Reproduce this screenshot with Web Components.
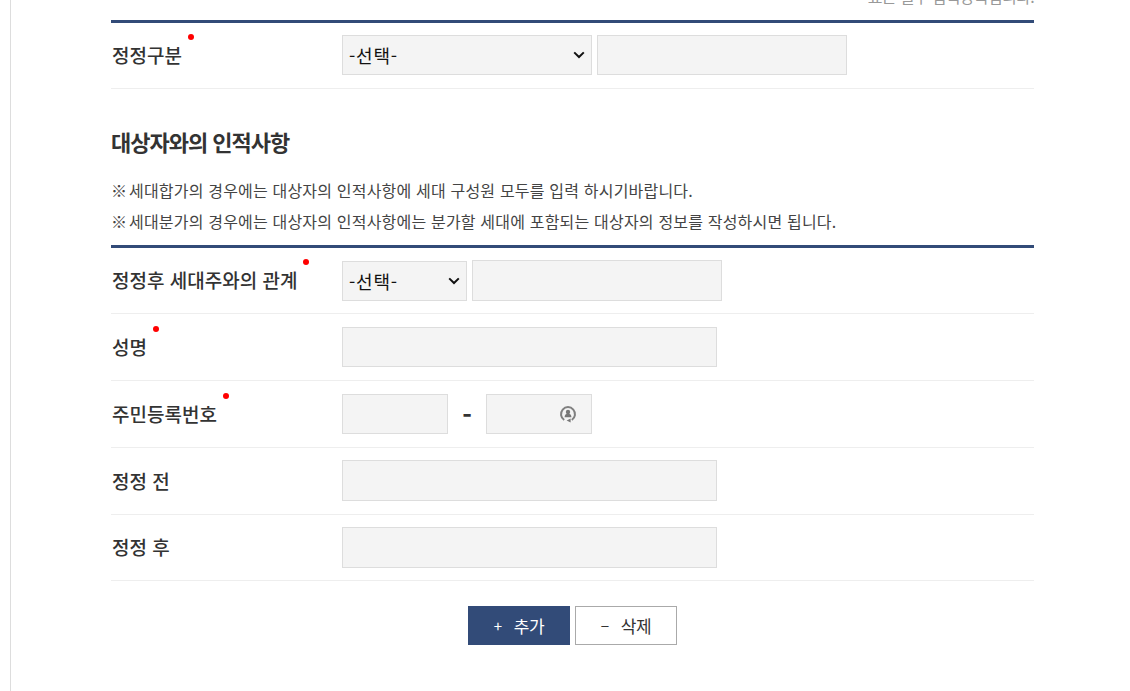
<!DOCTYPE html>
<html lang="ko">
<head>
<meta charset="utf-8">
<title>정정구분</title>
<style>
html, body { margin: 0; height: 100%; overflow: hidden; background: #fff; }
body { font-family: "Noto Sans CJK KR", "Noto Sans", sans-serif; color: #333; }
</style>
</head>
<body>
<form-page>
  <note-top>* 표는 필수 입력항목입니다.</note-top>
  <form-table>
    <form-row label="정정구분" required short up>
      <form-select width="250"></form-select>
      <form-input width="250"></form-input>
    </form-row>
  </form-table>
  <section-title>대상자와의 인적사항</section-title>
  <info-note><span style="display:inline-block;width:18px">※</span>세대합가의 경우에는 대상자의 인적사항에 세대 구성원 모두를 입력 하시기바랍니다.</info-note>
  <info-note><span style="display:inline-block;width:18px">※</span>세대분가의 경우에는 대상자의 인적사항에는 분가할 세대에 포함되는 대상자의 정보를 작성하시면 됩니다.</info-note>
  <form-table class="second">
    <form-row label="정정후 세대주와의 관계" required short>
      <form-select width="125"></form-select>
      <form-input width="250" height="41"></form-input>
    </form-row>
    <form-row label="성명" required>
      <form-input width="375"></form-input>
    </form-row>
    <form-row label="주민등록번호" required>
      <form-input width="106"></form-input>
      <span style="font-size:26px;font-weight:700;width:28px;text-align:center;color:#333;margin-bottom:2px">-</span>
      <form-input width="106" secure></form-input>
    </form-row>
    <form-row label="정정 전" up>
      <form-input width="375" height="41"></form-input>
    </form-row>
    <form-row label="정정 후" short>
      <form-input width="375" height="41"></form-input>
    </form-row>
  </form-table>
  <button-bar>
    <form-button primary icon="+">추가</form-button>
    <form-button icon="−">삭제</form-button>
  </button-bar>
</form-page>

<script>
/**** 공통 */
function define(name, css, html, init) {
  customElements.define(name, class extends HTMLElement {
    constructor() {
      super();
      const shadow = this.attachShadow({ mode: 'open' });
      shadow.innerHTML = `<style>${css}</style>${html}`;
      if (init) init(this, shadow);
    }
  });
}

/**** 페이지 */
define('form-page', `
  :host { display: block; height: 691px; margin-left: 10px; border-left: 1px solid #ddd; box-sizing: border-box; overflow: hidden; }
  .inner { width: 923px; margin-left: 100px; margin-top: -12px; }
`, `<div class="inner"><slot></slot></div>`);

define('note-top', `
  :host { display: block; height: 32px; line-height: 16px; font-size: 16px; color: #999; text-align: right; letter-spacing: -0.65px; }
`, `<slot></slot>`);

/**** 표 */
define('form-table', `
  :host { display: block; border-top: 3px solid #324b78; }
  :host(.second) { margin-top: 8px; }
`, `<slot></slot>`);

define('form-row', `
  :host { display: flex; align-items: center; height: 66px; border-bottom: 1px solid #eee; }
  :host([short]) { height: 65px; }
  :host([up]) .fields { margin-bottom: 1px; }
  .label { width: 230px; padding-left: 1px; flex: none; font-size: 19px; font-weight: 500; letter-spacing: 0; color: #333; position: relative; top: -1px; }
  .label span { position: relative; }
  .dot { position: absolute; right: -12px; top: -7px; width: 6px; height: 6px; border-radius: 50%; background: #f00; }
  .fields { display: flex; align-items: center; gap: 5px; }
`, `<div class="label"><span></span></div><div class="fields"><slot></slot></div>`, (el, shadow) => {
  queueMicrotask(() => {
    const span = shadow.querySelector('.label span');
    span.textContent = el.getAttribute('label');
    if (el.hasAttribute('required')) {
      const dot = document.createElement('i');
      dot.className = 'dot';
      span.appendChild(dot);
    }
  });
});

const FIELD_CSS = `
  :host { display: block; position: relative; }
  input, select { display: block; box-sizing: border-box; width: 100%; height: 40px; background: #f4f4f4; border: 1px solid #ddd; border-radius: 0; padding: 0 6px; margin: 0; font: 400 18px "Noto Sans CJK KR", sans-serif; color: #111; outline: none; appearance: none; }
  select { letter-spacing: 0.8px; }
  svg { position: absolute; }
  svg[hidden] { display: none; }
`;

define('form-select', FIELD_CSS + `
  .arrow { right: 7px; top: 16px; width: 12px; height: 8px; pointer-events: none; }
`, `<select><option>-선택-</option></select><svg class="arrow" viewBox="0 0 12 8" fill="none"><path d="M1.2 1.4L6 6l4.8-4.6" stroke="#111" stroke-width="2"/></svg>`, (el, shadow) => {
  queueMicrotask(() => { el.style.width = el.getAttribute('width') + 'px'; });
});

define('form-input', FIELD_CSS + `
  .secure { right: 14px; top: 10px; width: 20px; height: 20px; }
`, `<input type="text"><svg class="secure" viewBox="0 0 20 20" hidden fill="none"><path d="M6.2 16a7 7 0 1 1 7.6 0" stroke="#808080" stroke-width="2"/><circle cx="10" cy="8" r="2.2" fill="#777"/><path d="M6.6 13.2a3.4 3.4 0 0 1 6.8 0z" fill="#777"/><path d="M12.6 14.6v4l-4-2z" fill="#777"/></svg>`, (el, shadow) => {
  queueMicrotask(() => {
    el.style.width = el.getAttribute('width') + 'px';
    if (el.getAttribute('height')) shadow.querySelector('input').style.height = el.getAttribute('height') + 'px';
    if (el.hasAttribute('secure')) shadow.querySelector('svg').removeAttribute('hidden');
  });
});

/**** 제목, 안내 */
define('section-title', `
  :host { display: block; margin-top: 35px; margin-bottom: 17px; height: 34px; line-height: 34px; font-size: 22px; font-weight: 700; letter-spacing: -1px; color: #333; }
`, `<slot></slot>`);

define('info-note', `
  :host { display: block; height: 31px; line-height: 31px; font-size: 16px; letter-spacing: 0.19px; color: #444; }
`, `<slot></slot>`);

/**** 버튼 */
define('button-bar', `
  :host { display: flex; justify-content: center; gap: 5px; margin-top: 25px; }
`, `<slot></slot>`);

define('form-button', `
  :host { display: flex; align-items: center; justify-content: center; box-sizing: border-box; width: 102px; height: 39px; font-size: 17px; letter-spacing: -0.5px; border: 1px solid #aaa; background: #fff; color: #333; }
  :host([primary]) { background: #324b78; border-color: #324b78; color: #fff; }
  .icon { width: 20px; font-size: 15px; }
`, `<span class="icon"></span><slot></slot>`, (el, shadow) => {
  queueMicrotask(() => { shadow.querySelector('.icon').textContent = el.getAttribute('icon'); });
});
</script>
</body>
</html>
